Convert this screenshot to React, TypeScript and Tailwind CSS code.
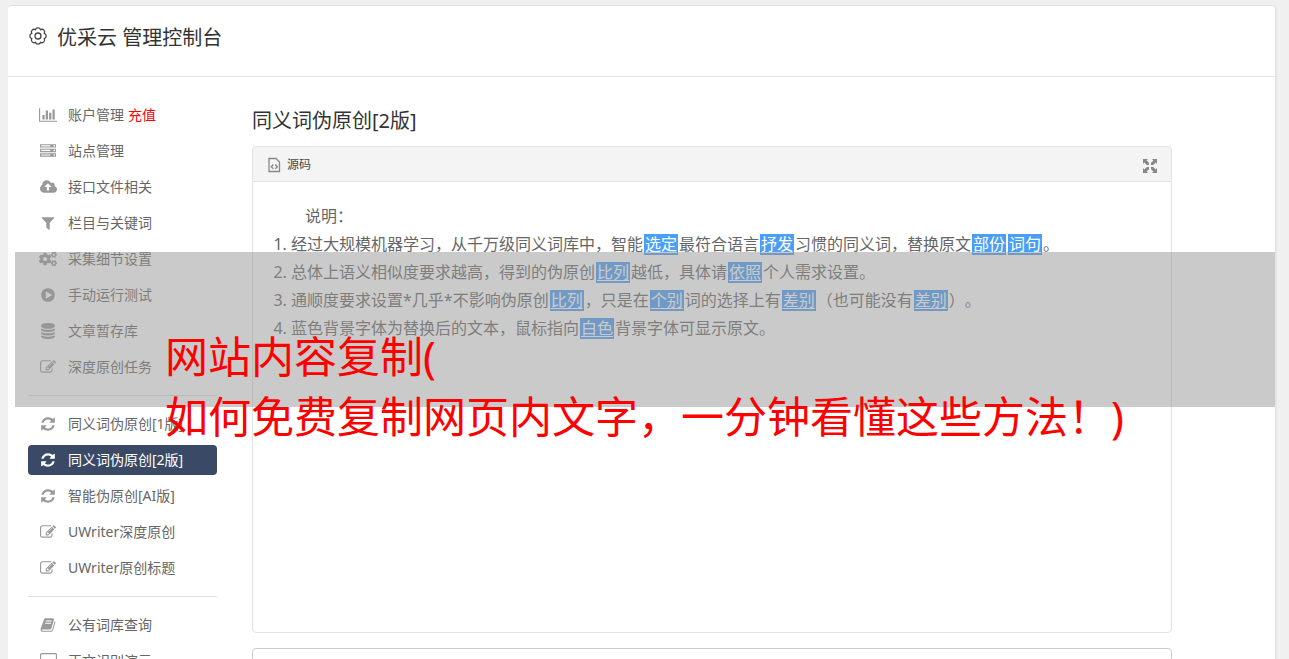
import type { ReactNode } from "react";
import { FaCogs } from "react-icons/fa";

interface NavItem {
  label: string;
  icon: ReactNode;
  extra?: string;
  active?: boolean;
}

function Glyph({ d, box = "0 0 1792 1792", width = "w-4" }: { d: string; box?: string; width?: string }) {
  return (
    <svg viewBox={box} className={`h-4 ${width} fill-current`} aria-hidden="true">
      <path d={d} />
    </svg>
  );
}

const chart = (
  <Glyph
    box="0 0 2048 1792"
    width="w-[18px]"
    d="M640 896v512h-256v-512h256zm384-512v1024h-256v-1024h256zm1024 1152v128h-2048v-1536h128v1408h1920zm-640-896v768h-256v-768h256zm384-384v1152h-256v-1152h256z"
  />
);

const server = (
  <Glyph d="M128 1408h1024v-128h-1024v128zm0-512h1024v-128h-1024v128zm1568 448q0-40-28-68t-68-28-68 28-28 68 28 68 68 28 68-28 28-68zm-1568-960h1024v-128h-1024v128zm1568 448q0-40-28-68t-68-28-68 28-28 68 28 68 68 28 68-28 28-68zm0-512q0-40-28-68t-68-28-68 28-28 68 28 68 68 28 68-28 28-68zm96 832v384h-1792v-384h1792zm0-512v384h-1792v-384h1792zm0-512v384h-1792v-384h1792z" />
);

const cloud = (
  <Glyph
    box="-64 0 1920 1792"
    width="w-[17px]"
    d="M1216 864q0-14-9-23l-352-352q-9-9-23-9t-23 9l-351 351q-10 12-10 24 0 14 9 23t23 9h224v352q0 13 9.5 22.5t22.5 9.5h192q13 0 22.5-9.5t9.5-22.5v-352h224q13 0 22.5-9.5t9.5-22.5zm640 288q0 159-112.5 271.5t-271.5 112.5h-1088q-185 0-316.5-131.5t-131.5-316.5q0-130 70-240t188-165q-2-30-2-43 0-212 150-362t362-150q156 0 285.5 87t188.5 231q71-62 166-62 106 0 181 75t75 181q0 76-41 138 130 31 213.5 135.5t83.5 238.5z"
  />
);

const filter = (
  <Glyph d="M1595 295q17 41-14 70l-493 493v742q0 42-39 59-13 5-25 5-27 0-45-19l-256-256q-19-19-19-45v-486l-493-493q-31-29-14-70 17-39 59-39h1280q42 0 59 39z" />
);

const play = (
  <Glyph d="M896 128q209 0 385.5 103t279.5 279.5 103 385.5-103 385.5-279.5 279.5-385.5 103-385.5-103-279.5-279.5-103-385.5 103-385.5 279.5-279.5 385.5-103zm384 823q32-18 32-55t-32-55l-544-320q-31-19-64-1-32 19-32 56v640q0 37 32 56 16 8 32 8 17 0 32-9z" />
);

const database = (
  <Glyph d="M896 768q237 0 443-43t325-127v170q0 69-103 128t-280 93.5-385 34.5-385-34.5-280-93.5-103-128v-170q119 84 325 127t443 43zm0 768q237 0 443-43t325-127v170q0 69-103 128t-280 93.5-385 34.5-385-34.5-280-93.5-103-128v-170q119 84 325 127t443 43zm0-384q237 0 443-43t325-127v170q0 69-103 128t-280 93.5-385 34.5-385-34.5-280-93.5-103-128v-170q119 84 325 127t443 43zm0-1152q208 0 385 34.5t280 93.5 103 128v128q0 69-103 128t-280 93.5-385 34.5-385-34.5-280-93.5-103-128v-128q0-69 103-128t280-93.5 385-34.5z" />
);

const edit = (
  <Glyph d="M888 1184l116-116-152-152-116 116v56h96v96h56zm440-720q-16-16-33 1l-350 350q-17 17-1 33t33-1l350-350q17-17 1-33zm80 594v190q0 119-84.5 203.5t-203.5 84.5h-832q-119 0-203.5-84.5t-84.5-203.5v-832q0-119 84.5-203.5t203.5-84.5h832q63 0 117 25 15 7 18 23 3 17-9 29l-49 49q-14 14-32 8-23-6-45-6h-832q-66 0-113 47t-47 113v832q0 66 47 113t113 47h832q66 0 113-47t47-113v-126q0-13 9-22l64-64q15-15 35-7t20 29zm-96-738l288 288-672 672h-288v-288zm444 132l-92 92-288-288 92-92q28-28 68-28t68 28l152 152q28 28 28 68t-28 68z" />
);

const refresh = (
  <Glyph d="M1639 1056q0 5-1 7-64 268-268 434.5t-478 166.5q-146 0-282.5-55t-243.5-157l-129 129q-19 19-45 19t-45-19-19-45v-448q0-26 19-45t45-19h448q26 0 45 19t19 45-19 45l-137 137q71 66 161 102t187 36q134 0 250-65t186-179q11-17 53-117 8-23 30-23h192q13 0 22.5 9.5t9.5 22.5zm25-800v448q0 26-19 45t-45 19h-448q-26 0-45-19t-19-45 19-45l138-138q-148-137-349-137-134 0-250 65t-186 179q-11 17-53 117-8 23-30 23h-199q-13 0-22.5-9.5t-9.5-22.5v-7q65-268 270-434.5t480-166.5q146 0 284 55.5t245 156.5l130-129q19-19 45-19t45 19 19 45z" />
);

const book = (
  <Glyph d="M1703 478q40 57 18 129l-275 906q-19 64-76.5 107.5t-122.5 43.5h-923q-77 0-148.5-53.5t-99.5-131.5q-24-67-2-127 0-4 3-27t4-37q1-8-3-21.5t-3-19.5q2-11 8-21t16.5-23.5 16.5-23.5q23-38 45-91.5t30-91.5q3-10 .5-30t-.5-28q3-11 17-28t17-23q21-36 42-92t25-90q1-9-2.5-32t.5-28q4-13 22-30.5t22-22.5q19-26 42.5-84.5t27.5-96.5q1-8-3-25.5t-2-26.5q2-8 9-18t18-23 17-21q8-12 16.5-30.5t15-35 16-36 19.5-32 26.5-23.5 36-11.5 47.5 5.5l-1 3q38-9 51-9h761q74 0 114 56t18 130l-274 906q-36 119-71.5 153.5t-128.5 34.5h-869q-27 0-38 15-11 16-1 43 24 70 144 70h923q29 0 56-15.5t35-41.5l300-987q7-22 5-57 38 15 59 43zm-1064 2q-4 13 2 22.5t20 9.5h608q13 0 25.5-9.5t16.5-22.5l21-64q4-13-2-22.5t-20-9.5h-608q-13 0-25.5 9.5t-16.5 22.5zm-83 256q-4 13 2 22.5t20 9.5h608q13 0 25.5-9.5t16.5-22.5l21-64q4-13-2-22.5t-20-9.5h-608q-13 0-25.5 9.5t-16.5 22.5z" />
);

const desktop = (
  <Glyph
    box="-64 0 1920 1792"
    width="w-[17px]"
    d="M1728 992v-832q0-13-9.5-22.5t-22.5-9.5h-1600q-13 0-22.5 9.5t-9.5 22.5v832q0 13 9.5 22.5t22.5 9.5h1600q13 0 22.5-9.5t9.5-22.5zm128-832v1088q0 66-47 113t-113 47h-544q0 37 16 77.5t32 71 16 43.5q0 26-19 45t-45 19h-512q-26 0-45-19t-19-45q0-14 16-44t32-70 16-78h-544q-66 0-113-47t-47-113v-1088q0-66 47-113t113-47h1600q66 0 113 47t47 113z"
  />
);

const groups: NavItem[][] = [
  [
    { label: "账户管理", icon: chart, extra: "充值" },
    { label: "站点管理", icon: server },
    { label: "接口文件相关", icon: cloud },
    { label: "栏目与关键词", icon: filter },
    { label: "采集细节设置", icon: <FaCogs className="size-[18px]" /> },
    { label: "手动运行测试", icon: play },
    { label: "文章暂存库", icon: database },
    { label: "深度原创任务", icon: edit },
  ],
  [
    { label: "同义词伪原创[1版]", icon: refresh },
    { label: "同义词伪原创[2版]", icon: refresh, active: true },
    { label: "智能伪原创[AI版]", icon: refresh },
    { label: "UWriter深度原创", icon: edit },
    { label: "UWriter原创标题", icon: edit },
  ],
  [
    { label: "公有词库查询", icon: book },
    { label: "正文识别演示", icon: desktop },
  ],
];

function Mark({ children }: { children: ReactNode }) {
  return (
    <span className="mx-px inline-block h-[21px] bg-[#4b9ef5] px-px leading-[21px] text-white underline underline-offset-2">
      {children}
    </span>
  );
}

function Sidebar() {
  return (
    <nav className="w-[189px] shrink-0">
      {groups.map((group, i) => (
        <div key={i}>
          {i > 0 && <hr className="my-[13px] border-[#ddd]" />}
          <ul className="flex flex-col gap-1.5">
            {group.map((item) => (
              <li key={item.label}>
                <a
                  href="#"
                  className={
                    item.active
                      ? "flex h-[30px] items-center rounded bg-[#3a4a66] pl-2.5 text-sm text-white"
                      : "flex h-[30px] items-center pl-2.5 text-sm text-[#666]"
                  }
                >
                  <span
                    className={
                      item.active
                        ? "mr-2.5 flex w-5 justify-center"
                        : "mr-2.5 flex w-5 justify-center text-[#999]"
                    }
                  >
                    {item.icon}
                  </span>
                  {item.label}
                  {item.extra && <span className="ml-1 text-[#f00]">{item.extra}</span>}
                </a>
              </li>
            ))}
          </ul>
        </div>
      ))}
    </nav>
  );
}

function Editor() {
  return (
    <section className="rounded border border-[#e3e3e3]">
      <div className="flex h-[35px] items-center justify-between rounded-t border-b border-[#e3e3e3] bg-[#f4f4f4] px-3.5">
        <button className="flex items-center gap-1.5 text-xs text-[#484848]">
          <svg viewBox="0 0 14 16" className="mt-0.5 h-4 w-3.5" fill="none" stroke="#888" aria-hidden="true">
            <path d="M2 1.5h7l3.5 3.5v9.5H2z" strokeWidth="1.3" />
            <path d="M6.3 7.5L4.3 9.7l2 2.2M8.3 7.5l2 2.2-2 2.2" strokeWidth="1.4" />
          </svg>
          <span className="pt-px">源码</span>
        </button>
        <button aria-label="全屏" className="mt-1 text-[#888]">
          <svg viewBox="0 0 14 14" className="size-3.5" fill="currentColor" aria-hidden="true">
            <path d="M0 0h5L3.6 1.4 6 3.8V6H3.8L1.4 3.6 0 5zM14 0v5l-1.4-1.4L10.2 6H8V3.8l2.4-2.4L9 0zM0 14V9l1.4 1.4L3.8 8H6v2.2l-2.4 2.4L5 14zM14 14H9l1.4-1.4L8 10.2V8h2.2l2.4 2.4L14 9z" />
          </svg>
        </button>
      </div>
      <div className="min-h-[450px] px-5 pt-5 text-base leading-7 text-[#666]">
        <p className="indent-8">说明：</p>
        <ol className="list-decimal pl-[18px]">
          <li>
            经过大规模机器学习，从千万级同义词库中，智能<Mark>选定</Mark>最符合语言<Mark>抒发</Mark>
            习惯的同义词，替换原文<Mark>部份</Mark><Mark>词句</Mark>。
          </li>
          <li>
            总体上语义相似度要求越高，得到的伪原创<Mark>比列</Mark>越低，具体请<Mark>依照</Mark>
            个人需求设置。
          </li>
          <li>
            通顺度要求设置*几乎*不影响伪原创<Mark>比列</Mark>，只是在<Mark>个别</Mark>词的选择上有
            <Mark>差别</Mark>（也可能没有<Mark>差别</Mark>）。
          </li>
          <li>
            蓝色背景字体为替换后的文本，鼠标指向<Mark>白色</Mark>背景字体可显示原文。
          </li>
        </ol>
      </div>
    </section>
  );
}

export default function App() {
  return (
    <div className="relative h-screen overflow-hidden bg-[#f0f0f0] px-2 pt-[5px] font-['Noto_Sans','Noto_Sans_CJK_SC',sans-serif] [text-spacing-trim:space-all]">
      <div className="mr-[5px] min-h-full rounded border border-l-0 border-[#e3e3e3] bg-white shadow-[1px_0_0_#e6e6e6]">
        <header className="flex h-[71px] items-start border-b border-[#e3e3e3] px-5 pt-[18px]">
          <svg
            viewBox="0 0 20 20"
            className="mt-0.5 mr-[9px] size-5 shrink-0"
            fill="none"
            stroke="#444"
            strokeWidth="1.3"
            strokeLinejoin="round"
            aria-hidden="true"
          >
            <path d="M16.2 12.6A2.6 2.6 0 0 1 12.6 16.2A2.7 2.7 0 0 1 7.4 16.2A2.6 2.6 0 0 1 3.8 12.6A2.7 2.7 0 0 1 3.8 7.4A2.6 2.6 0 0 1 7.4 3.8A2.7 2.7 0 0 1 12.6 3.8A2.6 2.6 0 0 1 16.2 7.4A2.7 2.7 0 0 1 16.2 12.6z" />
            <circle cx="10" cy="10" r="3" />
          </svg>
          <h1 className="text-xl text-[#333]">优采云 管理控制台</h1>
        </header>
        <div className="flex gap-[35px] pt-[23px] pl-5">
          <Sidebar />
          <main className="mr-[103px] min-w-0 flex-1">
            <h2 className="mt-[7px] mb-[11px] text-xl text-[#333]">同义词伪原创[2版]</h2>
            <Editor />
            <textarea
              aria-label="原文"
              className="mt-[15px] block h-40 w-full resize-none rounded border border-[#ccc] bg-white p-3 text-base"
            />
          </main>
        </div>
      </div>
      <div className="absolute top-[252px] right-3.5 left-[15px] h-[155px] bg-[#969696]/50 pt-[75px] pl-[150px]">
        <p className="text-[43px] leading-[60px] whitespace-nowrap text-[#f00]">
          网站内容复制(
          <br />
          如何免费复制网页内文字，一分钟看懂这些方法！)
        </p>
      </div>
    </div>
  );
}
